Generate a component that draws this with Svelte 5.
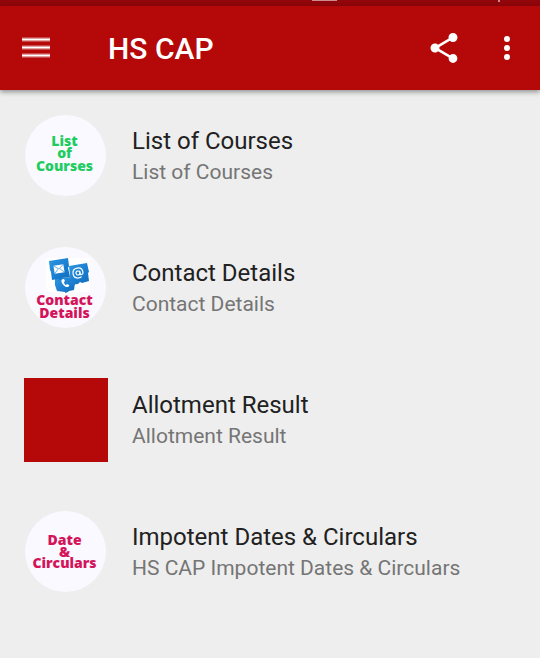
<script lang="ts">
	interface BadgeLine {
		text: string;
		y: number;
	}

	interface MenuItem {
		id: string;
		title: string;
		subtitle: string;
		tone?: 'green' | 'pink';
		contact?: boolean;
		lines?: BadgeLine[];
	}

	const items: MenuItem[] = [
		{
			id: 'courses',
			title: 'List of Courses',
			subtitle: 'List of Courses',
			tone: 'green',
			lines: [
				{ text: 'List', y: 32 },
				{ text: 'of', y: 44 },
				{ text: 'Courses', y: 57 }
			]
		},
		{
			id: 'contact',
			title: 'Contact Details',
			subtitle: 'Contact Details',
			tone: 'pink',
			contact: true,
			lines: [
				{ text: 'Contact', y: 59 },
				{ text: 'Details', y: 72 }
			]
		},
		{
			id: 'allotment',
			title: 'Allotment Result',
			subtitle: 'Allotment Result'
		},
		{
			id: 'dates',
			title: 'Impotent Dates & Circulars',
			subtitle: 'HS CAP Impotent Dates & Circulars',
			tone: 'pink',
			lines: [
				{ text: 'Date', y: 35 },
				{ text: '&', y: 47 },
				{ text: 'Circulars', y: 58 }
			]
		}
	];
</script>

<div class="screen">
	<div class="status-bar" aria-hidden="true">
		<span class="status-mark wide"></span>
		<span class="status-mark"></span>
	</div>

	<header class="app-bar">
		<button class="icon-button" aria-label="Open menu">
			<svg width="28" height="24" viewBox="0 0 28 24" aria-hidden="true">
				<path d="M0 3.5h28M0 11.5h28M0 19.5h28" stroke="#fff" stroke-opacity=".5" stroke-width="4" />
				<path d="M0 3.5h28M0 11.5h28M0 19.5h28" stroke="#fff" stroke-width="1.6" />
			</svg>
		</button>
		<h1>HS CAP</h1>
		<button class="icon-button" aria-label="Share">
			<svg width="36" height="36" viewBox="0 0 24 24" fill="#fff" aria-hidden="true">
				<path d="M18 16.08c-.76 0-1.44.3-1.96.77L8.91 12.7c.05-.23.09-.46.09-.7s-.04-.47-.09-.7l7.05-4.11c.54.5 1.25.81 2.04.81 1.66 0 3-1.34 3-3s-1.34-3-3-3-3 1.34-3 3c0 .24.04.47.09.7L8.04 9.81C7.5 9.31 6.79 9 6 9c-1.66 0-3 1.34-3 3s1.34 3 3 3c.79 0 1.5-.31 2.04-.81l7.12 4.16c-.05.21-.08.43-.08.65 0 1.61 1.31 2.92 2.92 2.92s2.92-1.31 2.92-2.92-1.31-2.92-2.92-2.92z" />
			</svg>
		</button>
		<button class="icon-button more" aria-label="More options">
			<svg width="36" height="36" viewBox="0 0 24 24" fill="#fff" aria-hidden="true">
				<circle cx="12" cy="6" r="2" />
				<circle cx="12" cy="12" r="2" />
				<circle cx="12" cy="18" r="2" />
			</svg>
		</button>
	</header>

	<main>
		<ul class="menu">
			{#each items as item (item.id)}
				<li>
					<a class="menu-item" href="#{item.id}">
						{#if item.lines}
							<svg class="badge {item.tone}" viewBox="0 0 84 84" aria-hidden="true">
								<defs>
									<linearGradient id="tile" x1="0" y1="0" x2="1" y2="1">
										<stop offset="0" stop-color="#2b98e4" />
										<stop offset="1" stop-color="#1069bd" />
									</linearGradient>
								</defs>
								<circle cx="41.5" cy="41.5" r="40.5" fill="#f9f9ff" />
								{#if item.contact}
									<path d="M22 12h44v34H22z" fill="#fff" />
									<path d="M31 32l19-1 1 6-1 7-5 1-1 1-3 1v-1l-8-1-2-6z" fill="url(#tile)" />
									<path d="M45 20l18-3 2 9-1 1 1 8-7 2-2-1-2 2-7 1z" fill="url(#tile)" />
									<path d="M25 15l19-3 1 8-1 2 2 9-8 1-1 2-3-1-6 1-1-8-1-2z" fill="url(#tile)" />
									<g transform="rotate(-9 35 23)">
										<rect x="30" y="19" width="10" height="8" fill="#fff" />
										<path d="M30 19l5 4 5-4M30 27l4-4M40 27l-4-4" fill="none" stroke="#3b94dc" stroke-width=".7" />
									</g>
									<path d="M39 33c-2 1-2 2-1 4 1 2 3 4 5 4 1 0 3-1 2-2l-2-1-1 1c-1 0-2-2-2-3l1-1-1-2z" fill="#fff" />
									<g transform="rotate(-8 54 27)" fill="none" stroke="#fff" stroke-width="1.2">
										<circle cx="54" cy="27" r="2" />
										<path d="M56 25v3c0 2 3 1 3-1 0-3-2-5-5-5s-5 2-5 5 2 5 5 5c1 0 2 0 3-1" />
									</g>
								{/if}
								{#each item.lines as line (line.text)}
									<text x="40.5" y={line.y} text-anchor="middle">{line.text}</text>
								{/each}
							</svg>
						{:else}
							<span class="swatch"></span>
						{/if}
						<span class="labels">
							<span class="title">{item.title}</span>
							<span class="subtitle">{item.subtitle}</span>
						</span>
					</a>
				</li>
			{/each}
		</ul>
	</main>
</div>

<style>
	:global(body) {
		margin: 0;
		background: #eeeeee;
	}

	.screen {
		min-height: 100vh;
		background: #eeeeee;
		font-family: Roboto, sans-serif;
	}

	.status-bar {
		display: flex;
		justify-content: flex-end;
		gap: 161px;
		height: 6px;
		padding-right: 40px;
		background: #91060a;
	}

	.status-mark {
		width: 2px;
		height: 2px;
		background: #cb8b8d;
	}

	.status-mark.wide {
		width: 25px;
		height: 1px;
	}

	.app-bar {
		display: flex;
		align-items: center;
		height: 84px;
		padding: 0 15px 0 22px;
		background: #b50808;
		box-shadow: 0 2px 5px rgba(0, 0, 0, 0.4);
	}

	.icon-button {
		display: flex;
		padding: 0;
		border: none;
		background: none;
		cursor: pointer;
	}

	.icon-button.more {
		margin-left: 27px;
	}

	h1 {
		flex: 1;
		margin: 0 0 0 58px;
		padding-top: 2px;
		color: #fff;
		font-size: 30px;
		font-weight: 500;
		line-height: 36px;
	}

	.menu {
		margin: 0;
		padding: 0;
		list-style: none;
	}

	.menu-item {
		display: flex;
		align-items: center;
		gap: 24px;
		padding: 24px;
		text-decoration: none;
	}

	.badge,
	.swatch {
		flex: none;
		width: 84px;
		height: 84px;
	}

	.badge text {
		font-family: 'Open Sans', sans-serif;
		font-size: 14px;
		font-weight: 800;
	}

	.badge.green {
		fill: #1fcc5f;
	}

	.badge.pink {
		fill: #d4145a;
	}

	.swatch {
		background: #b50808;
	}

	.labels {
		display: flex;
		flex-direction: column;
	}

	.title {
		color: #212121;
		font-size: 24px;
		line-height: 32px;
	}

	.subtitle {
		color: #757575;
		font-size: 21px;
		line-height: 30px;
	}
</style>
